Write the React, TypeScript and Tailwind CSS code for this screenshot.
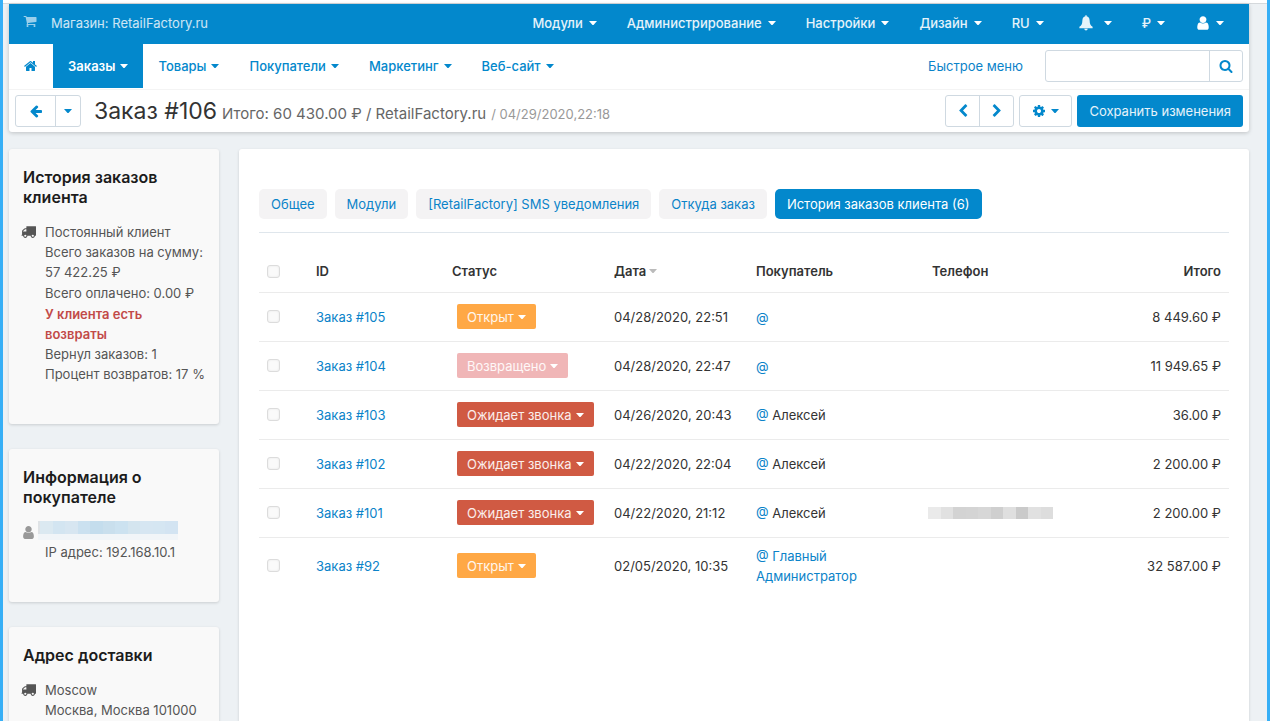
import React, { useState } from "react";

const ICONS = {
  home: "M1408 992v480q0 26-19 45t-45 19h-384v-384h-256v384h-384q-26 0-45-19t-19-45v-480q0-1 .5-3t.5-3l575-474 575 474q1 2 1 6zm223-69l-62 74q-8 9-21 11h-3q-13 0-21-7l-692-577-692 577q-12 8-24 7-13-2-21-11l-62-74q-8-10-7-23.5t11-21.5l719-599q32-26 76-26t76 26l244 204v-195q0-14 9-23t23-9h192q14 0 23 9t9 23v408l219 182q10 8 11 21.5t-7 23.5z",
  cart: "M704 1536q0 52-38 90t-90 38-90-38-38-90 38-90 90-38 90 38 38 90zm896 0q0 52-38 90t-90 38-90-38-38-90 38-90 90-38 90 38 38 90zm128-1088v512q0 24-16.5 42.5t-40.5 21.5l-1044 122q13 60 13 70 0 16-24 64h920q26 0 45 19t19 45-19 45-45 19h-1024q-26 0-45-19t-19-45q0-11 8-31.5t16-36 21.5-40 15.5-29.5l-177-823h-204q-26 0-45-19t-19-45 19-45 45-19h256q16 0 28.5 6.5t19.5 15.5 13 24.5 8 26 5.5 29.5 4.5 26h1201q26 0 45 19t19 45z",
  truck: "M640 1408q0-52-38-90t-90-38-90 38-38 90 38 90 90 38 90-38 38-90zm-384-512h384v-256h-158q-13 0-22 9l-195 195q-9 9-9 22v30zm1280 512q0-52-38-90t-90-38-90 38-38 90 38 90 90 38 90-38 38-90zm256-1088v1024q0 15-4 26.5t-13.5 18.5-16.5 11.5-23.5 6-22.5 2-25.5 0-22.5-.5q0 106-75 181t-181 75-181-75-75-181h-384q0 106-75 181t-181 75-181-75-75-181h-64q-3 0-22.5.5t-25.5 0-22.5-2-23.5-6-16.5-11.5-13.5-18.5-4-26.5q0-26 19-45t45-19v-320q0-8-.5-35t0-38 2.5-34.5 6.5-37 14-30.5 22.5-30l198-198q19-19 50.5-32t58.5-13h160v-192q0-26 19-45t45-19h1024q26 0 45 19t19 45z",
  user: "M1536 1399q0 109-62.5 187t-150.5 78h-854q-88 0-150.5-78t-62.5-187q0-85 8.5-160.5t31.5-152 58.5-131 94-89 134.5-34.5q131 128 313 128t313-128q76 0 134.5 34.5t94 89 58.5 131 31.5 152 8.5 160.5zm-256-887q0 159-112.5 271.5t-271.5 112.5-271.5-112.5-112.5-271.5 112.5-271.5 271.5-112.5 271.5 112.5 112.5 271.5z",
  bell: "M896 0q70 0 70 72v60q300 60 330 420 20 400 90 520 70 130 250 250v150H156v-150q180-120 250-250 70-120 90-520 30-360 330-420V72q0-72 70-72zM700 1550h392q-20 180-196 180t-196-180z",
  cog: "M1152 896q0-106-75-181t-181-75-181 75-75 181 75 181 181 75 181-75 75-181zm512-109v222q0 12-8 23t-20 13l-185 28q-19 54-39 91 35 50 107 138 10 12 10 25t-9 23q-27 37-99 108t-94 71q-12 0-26-9l-138-108q-44 23-91 38-16 136-29 186-7 28-36 28h-222q-14 0-24.5-8.5t-11.5-21.5l-28-184q-49-16-90-37l-141 107q-10 9-25 9-14 0-25-11-126-114-165-168-7-10-7-23 0-12 8-23 15-21 51-66.5t54-70.5q-27-50-41-99l-183-27q-13-2-21-12.5t-8-23.5v-222q0-12 8-23t19-13l186-28q14-46 39-92-40-57-107-138-10-12-10-24 0-10 9-23 26-36 98.5-107.5t94.5-71.5q13 0 26 10l138 107q44-23 91-38 16-136 29-186 7-28 36-28h222q14 0 24.5 8.5t11.5 21.5l28 184q49 16 90 37l142-107q9-9 24-9 13 0 25 10 129 119 165 170 7 8 7 22 0 12-8 23-15 21-51 66.5t-54 70.5q26 50 41 98l183 28q13 2 21 12.5t8 23.5z",
  arrowLeft: "M1664 896v128q0 53-32.5 90.5t-84.5 37.5h-704l293 294q38 36 38 90t-38 90l-75 76q-37 37-90 37-52 0-91-37l-651-652q-37-37-37-90 0-52 37-91l651-650q38-38 91-38 52 0 90 38l75 74q38 38 38 91t-38 91l-293 293h704q52 0 84.5 37.5t32.5 90.5z",
  chevronLeft: "M1427 301l-531 531 531 531q19 19 19 45t-19 45l-166 166q-19 19-45 19t-45-19l-742-742q-19-19-19-45t19-45l742-742q19-19 45-19t45 19l166 166q19 19 19 45t-19 45z",
  chevronRight: "M1363 877l-742 742q-19 19-45 19t-45-19l-166-166q-19-19-19-45t19-45l531-531-531-531q-19-19-19-45t19-45l166-166q19-19 45-19t45 19l742 742q19 19 19 45t-19 45z",
  search: "M1216 832q0-185-131.5-316.5t-316.5-131.5-316.5 131.5-131.5 316.5 131.5 316.5 316.5 131.5 316.5-131.5 131.5-316.5zm512 832q0 52-38 90t-90 38q-54 0-90-38l-343-342q-179 124-399 124-143 0-273.5-55.5t-225-150-150-225-55.5-273.5 55.5-273.5 150-225 225-150 273.5-55.5 273.5 55.5 225 150 150 225 55.5 273.5q0 220-124 399l343 343q37 37 37 90z",
};

const Icon = ({ name, className }: { name: keyof typeof ICONS; className: string }) => (
  <svg viewBox="0 0 1792 1792" fill="currentColor" aria-hidden="true" className={`shrink-0 ${className}`}>
    <path d={ICONS[name]} />
  </svg>
);

const Caret = ({ className = "" }: { className?: string }) => (
  <svg viewBox="0 0 8 4" fill="currentColor" aria-hidden="true" className={`h-1 w-2 shrink-0 ${className}`}>
    <path d="M0 0h8L4.5 4h-1z" />
  </svg>
);

interface Order {
  id: number;
  status: "open" | "returned" | "waiting";
  date: string;
  customer?: string;
  customerLink?: boolean;
  hasPhone?: boolean;
  total: string;
}

const STATUSES = {
  open: { label: "Открыт", color: "bg-[#ffa845]" },
  returned: { label: "Возвращено", color: "bg-[#f0b6b7]" },
  waiting: { label: "Ожидает звонка", color: "bg-[#d05a43]" },
};

const ORDERS: Order[] = [
  { id: 105, status: "open", date: "04/28/2020, 22:51", total: "8 449.60 ₽" },
  { id: 104, status: "returned", date: "04/28/2020, 22:47", total: "11 949.65 ₽" },
  { id: 103, status: "waiting", date: "04/26/2020, 20:43", customer: "Алексей", total: "36.00 ₽" },
  { id: 102, status: "waiting", date: "04/22/2020, 22:04", customer: "Алексей", total: "2 200.00 ₽" },
  { id: 101, status: "waiting", date: "04/22/2020, 21:12", customer: "Алексей", hasPhone: true, total: "2 200.00 ₽" },
  { id: 92, status: "open", date: "02/05/2020, 10:35", customer: "Главный Администратор", customerLink: true, total: "32 587.00 ₽" },
];

const TABS = [
  "Общее",
  "Модули",
  "[RetailFactory] SMS уведомления",
  "Откуда заказ",
  "История заказов клиента (6)",
];

const TOP_MENU = ["Модули", "Администрирование", "Настройки", "Дизайн", "RU"];
const MAIN_MENU = ["Товары", "Покупатели", "Маркетинг", "Веб-сайт"];

const CHECKBOX =
  "block size-[13px] appearance-none rounded-[3px] border border-[#dcdcdc] bg-[#fafafa] shadow-[inset_0_0_2px_#e4e4e4] checked:bg-[#0388cc]";

// Hidden personal data
const MaskedEmail = () => (
  <div className="-ml-[7px] w-[140px]" aria-hidden="true">
    <div className="flex h-[13px]">
      <span className="w-[2px] bg-[#dfe3e6]" />
      <span className="flex-1 bg-[#dbe9f1]" />
      <span className="flex-1 bg-[#d3e5f1]" />
      <span className="flex-1 bg-[#d7e6f1]" />
      <span className="flex-1 bg-[#cbe1f0]" />
      <span className="flex-1 bg-[#c4dded]" />
      <span className="flex-1 bg-[#c9dfed]" />
      <span className="flex-1 bg-[#cce2f0]" />
      <span className="flex-1 bg-[#d4e5ef]" />
      <span className="flex-1 bg-[#d6e6f2]" />
      <span className="flex-1 bg-[#d5e6f2]" />
      <span className="flex-1 bg-[#d3e4f2]" />
    </div>
    <div className="h-[6px] bg-[#f1f5f8]" />
  </div>
);

const MaskedPhone = () => (
  <div className="-ml-1 flex h-3 w-[125px]" aria-hidden="true">
    <span className="flex-1 bg-[#eaeaea]" />
    <span className="flex-1 bg-[#e1e1e1]" />
    <span className="flex-1 bg-[#d3d3d3]" />
    <span className="flex-1 bg-[#d4d4d4]" />
    <span className="flex-1 bg-[#d7d7d7]" />
    <span className="flex-1 bg-[#cfcfcf]" />
    <span className="flex-1 bg-[#dfdfdf]" />
    <span className="flex-1 bg-[#cacaca]" />
    <span className="flex-1 bg-[#e1e1e1]" />
    <span className="flex-1 bg-[#dddddd]" />
  </div>
);

const SideCard = ({ title, className = "", children }: { title: string; className?: string; children: React.ReactNode }) => (
  <section className={`rounded-[3px] bg-[#f9f9f9] px-[14px] pt-[18px] shadow-[0_1px_3px_rgba(0,0,0,0.15)] ${className}`}>
    <h2 className="text-base leading-5 font-semibold text-[#1c1c1c]">{title}</h2>
    {children}
  </section>
);

const OrdersTable: React.FC = () => {
  const [selected, setSelected] = useState<number[]>([]);

  const toggle = (id: number) => {
    setSelected((prev) => (prev.includes(id) ? prev.filter((x) => x !== id) : [...prev, id]));
  };

  const toggleAll = () => {
    setSelected(selected.length === ORDERS.length ? [] : ORDERS.map((o) => o.id));
  };

  return (
    <table className="mt-[18px] w-full table-fixed text-left text-[#333]">
      <thead>
        <tr className="h-[41px] border-b border-[#ebebeb]">
          <th className="w-[49px] px-2">
            <input
              type="checkbox"
              aria-label="Выбрать все"
              className={CHECKBOX}
              checked={selected.length === ORDERS.length}
              onChange={toggleAll}
            />
          </th>
          <th className="w-[136px] px-2 font-semibold">ID</th>
          <th className="w-[162px] px-2 font-semibold">Статус</th>
          <th className="w-[142px] px-2 font-semibold">
            <span className="flex items-center gap-[3px]">
              Дата <Caret className="text-[#bbb]" />
            </span>
          </th>
          <th className="w-[176px] px-2 font-semibold">Покупатель</th>
          <th className="px-2 font-semibold">Телефон</th>
          <th className="px-2 text-right font-semibold">Итого</th>
        </tr>
      </thead>
      <tbody>
        {ORDERS.map((order) => (
          <tr key={order.id} className="h-[49px] border-b border-[#ebebeb] last:border-b-0">
            <td className="px-2">
              <input
                type="checkbox"
                aria-label={`Выбрать заказ #${order.id}`}
                className={CHECKBOX}
                checked={selected.includes(order.id)}
                onChange={() => toggle(order.id)}
              />
            </td>
            <td className="px-2">
              <a href="#" className="text-[#0b83c9]">{`Заказ #${order.id}`}</a>
            </td>
            <td className="px-2">
              <button
                className={`ml-[5px] flex h-[25px] items-center gap-1 rounded-[2px] px-[10px] whitespace-nowrap text-white/90 ${STATUSES[order.status].color}`}
              >
                {STATUSES[order.status].label}
                <Caret className="text-white" />
              </button>
            </td>
            <td className="px-2 whitespace-nowrap">{order.date}</td>
            <td className="px-2 py-2">
              {order.customerLink ? (
                <a href="#" className="block w-[110px] text-[#0b83c9]">{`@ ${order.customer}`}</a>
              ) : (
                <>
                  <a href="#" className="text-[#0b83c9]">@</a> {order.customer}
                </>
              )}
            </td>
            <td className="px-2">{order.hasPhone && <MaskedPhone />}</td>
            <td className="px-2 text-right whitespace-nowrap">{order.total}</td>
          </tr>
        ))}
      </tbody>
    </table>
  );
};

const App: React.FC = () => {
  const [activeTab, setActiveTab] = useState(4);

  return (
    <div className="flex h-screen flex-col overflow-hidden border-x-[3px] border-[#36aff6] bg-[#edf1f4] font-['Inter',sans-serif] text-[13px] leading-5">
      <div className="h-1 shrink-0 border-b border-[#d5d9dc] bg-white" />

      <header className="mr-[18px] ml-[6px] shrink-0 rounded-b-[3px] bg-white shadow-[0_1px_4px_rgba(0,0,0,0.2)]">
        {/* Верхняя панель */}
        <div className="flex h-10 items-center justify-between bg-[#0388cc] pr-[10px] pb-[2px] pl-[14px] text-white/90">
          <a href="#" className="flex items-center gap-[14px] text-white/80">
            <Icon name="cart" className="mb-1 size-[14px] text-white/60" />
            Магазин: RetailFactory.ru
          </a>
          <nav className="flex">
            {TOP_MENU.map((item) => (
              <button key={item} className="flex items-center gap-[6px] px-[15px] font-medium">
                {item}
                <Caret className="text-white" />
              </button>
            ))}
            <button aria-label="Уведомления" className="flex items-center gap-[10px] px-[15px]">
              <Icon name="bell" className="ml-1 size-4" />
              <Caret className="text-white" />
            </button>
            <button aria-label="Валюта" className="flex items-center gap-[6px] px-[15px] font-medium">
              ₽
              <Caret className="text-white" />
            </button>
            <button aria-label="Профиль" className="flex items-center gap-[5px] px-[15px]">
              <Icon name="user" className="size-4 text-white" />
              <Caret className="text-white" />
            </button>
          </nav>
        </div>

        {/* Основное меню */}
        <div className="flex h-[46px] justify-between border-b border-[#f4f4f4] pr-[6px]">
          <nav className="flex h-11 items-stretch font-medium text-[#0388cc]">
            <a href="#" aria-label="Главная" className="flex w-11 items-center justify-center">
              <Icon name="home" className="size-[14px]" />
            </a>
            <button className="flex items-center gap-[5px] bg-[#0388cc] px-[15px] font-semibold text-white">
              Заказы
              <Caret />
            </button>
            {MAIN_MENU.map((item) => (
              <button key={item} className="flex items-center gap-[5px] px-[15px]">
                {item}
                <Caret />
              </button>
            ))}
          </nav>
          <div className="flex h-11 items-center gap-[22px]">
            <a href="#" className="text-[#0b83c9]">Быстрое меню</a>
            <form className="flex h-8 w-[198px] rounded-[3px] border border-[#cfd9e1]" onSubmit={(e) => e.preventDefault()}>
              <input type="text" aria-label="Поиск" className="min-w-0 flex-1 px-2 outline-none" />
              <button aria-label="Найти" className="flex w-[33px] items-center justify-center border-l border-[#cfd9e1] text-[#0388cc]">
                <Icon name="search" className="size-[14px]" />
              </button>
            </form>
          </div>
        </div>

        {/* Заголовок заказа */}
        <div className="flex h-[42px] items-center justify-between px-[6px]">
          <div className="flex items-center">
            <div className="flex h-8 rounded-[3px] border border-[#cfd9e1] text-[#0388cc]">
              <button aria-label="Назад" className="flex w-[39px] items-center justify-center">
                <Icon name="arrowLeft" className="size-[14px]" />
              </button>
              <button aria-label="Ещё" className="flex w-[25px] items-center justify-center border-l border-[#cfd9e1]">
                <Caret />
              </button>
            </div>
            <div className="ml-[13px] flex items-baseline gap-[5px] whitespace-nowrap">
              <h1 className="text-[23px] leading-8 text-[#333]">Заказ #106</h1>
              <span className="text-[15px] text-[#666]">Итого: 60 430.00 ₽ / RetailFactory.ru</span>
              <span className="text-[#999]">/ 04/29/2020,22:18</span>
            </div>
          </div>
          <div className="flex items-center text-[#0388cc]">
            <div className="flex h-8 rounded-[3px] border border-[#cfd9e1]">
              <button aria-label="Предыдущий" className="flex w-[33px] items-center justify-center">
                <Icon name="chevronLeft" className="size-[14px]" />
              </button>
              <button aria-label="Следующий" className="flex w-[34px] items-center justify-center border-l border-[#cfd9e1]">
                <Icon name="chevronRight" className="size-[14px]" />
              </button>
            </div>
            <button aria-label="Настройки" className="ml-[5px] flex h-8 w-[53px] items-center justify-center gap-[5px] rounded-[3px] border border-[#cfd9e1]">
              <Icon name="cog" className="size-[14px]" />
              <Caret />
            </button>
            <button className="ml-[5px] h-8 rounded-[3px] bg-[#0388cc] px-3 text-white/90">
              Сохранить изменения
            </button>
          </div>
        </div>
      </header>

      <div className="mt-[17px] mr-[18px] ml-[6px] flex min-h-0 flex-1 gap-5">
        <aside className="flex w-[210px] shrink-0 flex-col gap-[25px] text-[#555]">
          <SideCard title="История заказов клиента" className="pb-10">
            <div className="mt-[15px] flex gap-[9px]">
              <Icon name="truck" className="-ml-[2px] mt-[2px] size-[15px]" />
              <div className="whitespace-nowrap">
                <p>Постоянный клиент</p>
                <p>Всего заказов на сумму:<br />57 422.25 ₽</p>
                <p className="mt-px">Всего оплачено: 0.00 ₽</p>
                <p className="mt-px font-semibold text-[#c24a48]">У клиента есть<br />возвраты</p>
                <p>Вернул заказов: 1</p>
                <p>Процент возвратов: 17 %</p>
              </div>
            </div>
          </SideCard>

          <SideCard title="Информация о покупателе" className="pb-10">
            <div className="mt-[14px] flex gap-[9px]">
              <Icon name="user" className="-ml-[2px] mt-1 size-[15px] text-[#999]" />
              <div>
                <MaskedEmail />
                <p className="mt-[2px]">IP адрес: 192.168.10.1</p>
              </div>
            </div>
          </SideCard>

          <SideCard title="Адрес доставки" className="pb-10">
            <div className="mt-[15px] flex gap-[9px]">
              <Icon name="truck" className="-ml-[2px] mt-[2px] size-[15px]" />
              <div className="whitespace-nowrap">
                <p>Moscow</p>
                <p>Москва, Москва 101000</p>
              </div>
            </div>
          </SideCard>
        </aside>

        <main className="min-w-0 flex-1 rounded-t-[3px] bg-white px-5 pt-10 shadow-[0_1px_3px_rgba(0,0,0,0.15)]">
          <div className="flex gap-2 border-b border-[#dfe6ec] pb-[13px]">
            {TABS.map((tab, i) => (
              <button
                key={tab}
                onClick={() => setActiveTab(i)}
                className={`h-[30px] rounded-[5px] px-3 whitespace-nowrap ${
                  i === activeTab ? "bg-[#0388cc] text-white" : "bg-[#f4f3f4] text-[#0b83c9]"
                }`}
              >
                {tab}
              </button>
            ))}
          </div>
          <OrdersTable />
        </main>
      </div>
    </div>
  );
};

export default App;
